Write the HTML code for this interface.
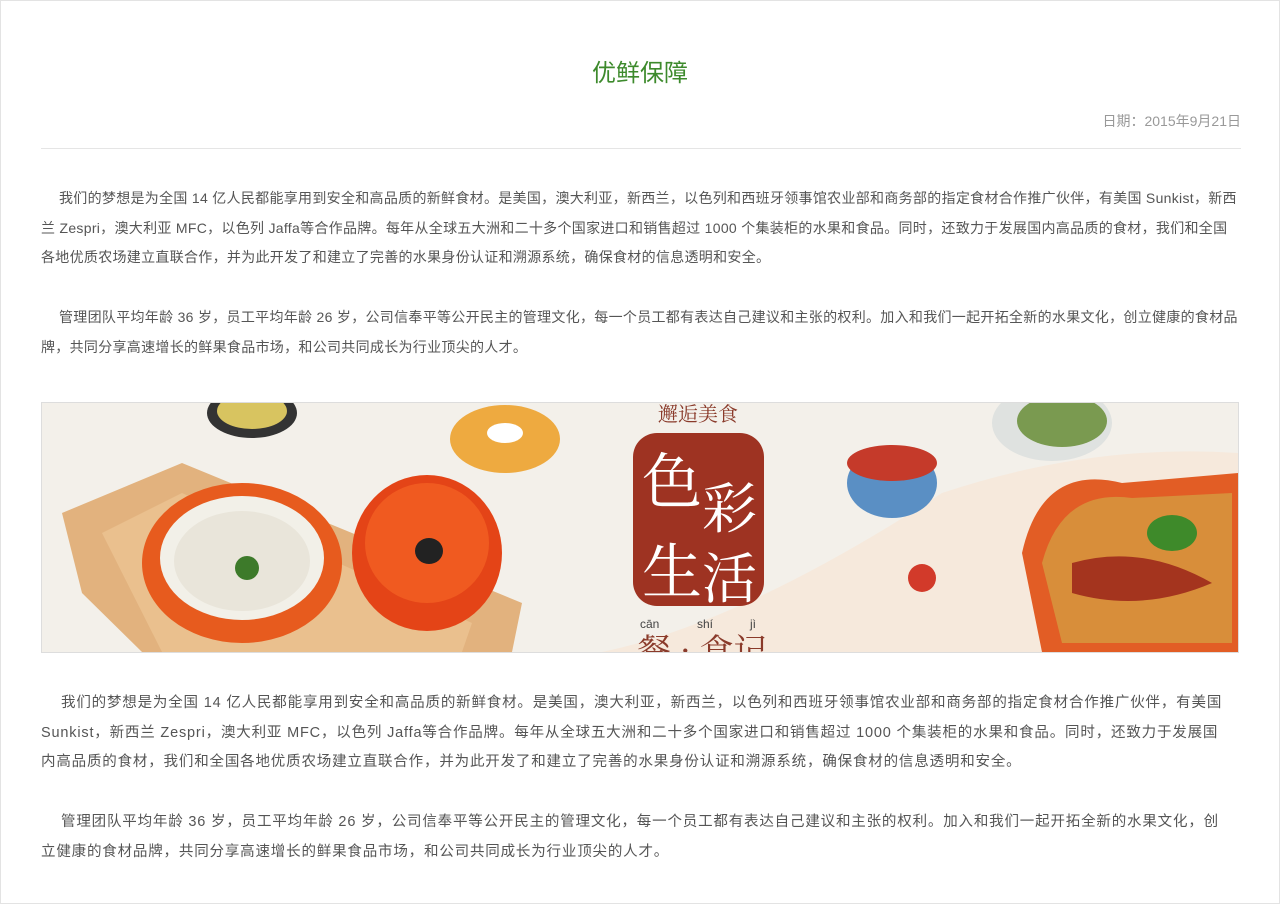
<!DOCTYPE html>
<html><head><meta charset="utf-8"><style>
html,body{margin:0;padding:0;background:#fff}
body{width:1278px;height:902px;border:1px solid #e3e3e3;position:relative;overflow:hidden;font-family:"Liberation Sans","Noto Sans CJK SC",sans-serif;color:#555}
h1{position:absolute;top:57px;left:0;width:100%;text-align:center;margin:0;font-weight:normal;font-size:24px;color:#3d8a2c;line-height:32px}
.date{position:absolute;top:110px;right:38px;font-size:14px;color:#999}
.hr{position:absolute;top:147px;left:40px;width:1200px;height:1px;background:#e5e5e5}
.p{position:absolute;left:40px;width:1200px;font-size:14px;line-height:29.5px;text-indent:18px;margin:0;letter-spacing:0.3px}
.p2{font-size:14.5px;line-height:29.5px;text-indent:20px;letter-spacing:0.82px}
.img{position:absolute;left:40px;top:401px;width:1196px;height:249px;border:1px solid #ddd;background:#f4f1ea;overflow:hidden}
</style></head><body>
<h1>优鲜保障</h1>
<div class="date">日期：2015年9月21日</div>
<div class="hr"></div>
<p class="p" style="top:183px">我们的梦想是为全国 14 亿人民都能享用到安全和高品质的新鲜食材。是美国，澳大利亚，新西兰，以色列和西班牙领事馆农业部和商务部的指定食材合作推广伙伴，有美国 Sunkist，新西兰 Zespri，澳大利亚 MFC，以色列 Jaffa等合作品牌。每年从全球五大洲和二十多个国家进口和销售超过 1000 个集装柜的水果和食品。同时，还致力于发展国内高品质的食材，我们和全国各地优质农场建立直联合作，并为此开发了和建立了完善的水果身份认证和溯源系统，确保食材的信息透明和安全。</p>
<p class="p" style="top:302px">管理团队平均年龄 36 岁，员工平均年龄 26 岁，公司信奉平等公开民主的管理文化，每一个员工都有表达自己建议和主张的权利。加入和我们一起开拓全新的水果文化，创立健康的食材品牌，共同分享高速增长的鲜果食品市场，和公司共同成长为行业顶尖的人才。</p>
<div class="img">
<svg width="1196" height="249" viewBox="0 0 1196 249">
<rect width="1196" height="249" fill="#f3f0ea"/>
<path d="M900 90 Q1050 40 1196 50 L1196 249 L560 249 Q700 220 900 90Z" fill="#f6e9dc"/>
<path d="M20 110 L140 60 L480 200 L470 249 L100 249 L40 190Z" fill="#e2b27e"/>
<path d="M60 130 L140 90 L430 220 L420 249 L120 249Z" fill="#eac08e"/>
<ellipse cx="200" cy="160" rx="100" ry="80" fill="#e75b1e"/>
<ellipse cx="200" cy="155" rx="82" ry="62" fill="#f2f0e8"/>
<ellipse cx="200" cy="158" rx="68" ry="50" fill="#e9e5da"/>
<circle cx="205" cy="165" r="12" fill="#3d7a2a"/>
<ellipse cx="385" cy="150" rx="75" ry="78" fill="#e44417"/>
<ellipse cx="385" cy="140" rx="62" ry="60" fill="#f05a20"/>
<ellipse cx="387" cy="148" rx="14" ry="13" fill="#222"/>
<ellipse cx="463" cy="36" rx="55" ry="34" fill="#eeaa40"/>
<ellipse cx="463" cy="30" rx="18" ry="10" fill="#fff"/>
<ellipse cx="210" cy="10" rx="45" ry="25" fill="#333"/>
<ellipse cx="210" cy="8" rx="35" ry="18" fill="#d8c460"/>
<rect x="591" y="30" width="131" height="173" rx="24" fill="#9e3322"/>
<text x="656" y="18" font-family="Noto Serif CJK SC,serif" font-size="20" fill="#8a3a2a" text-anchor="middle">邂逅美食</text>
<text x="600" y="100" font-family="Noto Serif CJK SC,serif" font-size="60" fill="#fff">色</text>
<text x="660" y="125" font-family="Noto Serif CJK SC,serif" font-size="55" fill="#fff">彩</text>
<text x="600" y="190" font-family="Noto Serif CJK SC,serif" font-size="60" fill="#fff">生</text>
<text x="660" y="195" font-family="Noto Serif CJK SC,serif" font-size="55" fill="#fff">活</text>
<text x="598" y="225" font-size="12" fill="#444">cān</text><text x="655" y="225" font-size="12" fill="#444">shí</text><text x="708" y="225" font-size="12" fill="#444">jì</text>
<text x="595" y="260" font-family="Noto Serif CJK SC,serif" font-size="34" fill="#8a3a2a">餐 · 食记</text>
<ellipse cx="850" cy="80" rx="45" ry="35" fill="#5a8fc4"/>
<ellipse cx="850" cy="60" rx="45" ry="18" fill="#c53a2a"/>
<ellipse cx="1010" cy="20" rx="60" ry="38" fill="#dfe2e0"/>
<ellipse cx="1020" cy="18" rx="45" ry="26" fill="#7a9a50"/>
<path d="M980 150 Q1000 60 1080 80 L1196 70 L1196 249 L1000 249Z" fill="#e25d25"/>
<path d="M1000 160 Q1020 85 1090 95 L1190 90 L1190 240 L1020 240Z" fill="#d88e3a"/>
<ellipse cx="1130" cy="130" rx="25" ry="18" fill="#3e8a2a"/>
<path d="M1030 160 Q1100 140 1170 180 Q1100 210 1030 190Z" fill="#a4341e"/>
<circle cx="880" cy="175" r="14" fill="#d23a2a"/>
</svg>
</div>
<p class="p p2" style="top:688px">我们的梦想是为全国 14 亿人民都能享用到安全和高品质的新鲜食材。是美国，澳大利亚，新西兰，以色列和西班牙领事馆农业部和商务部的指定食材合作推广伙伴，有美国 Sunkist，新西兰 Zespri，澳大利亚 MFC，以色列 Jaffa等合作品牌。每年从全球五大洲和二十多个国家进口和销售超过 1000 个集装柜的水果和食品。同时，还致力于发展国<br>内高品质的食材，我们和全国各地优质农场建立直联合作，并为此开发了和建立了完善的水果身份认证和溯源系统，确保食材的信息透明和安全。</p>
<p class="p p2" style="top:807px">管理团队平均年龄 36 岁，员工平均年龄 26 岁，公司信奉平等公开民主的管理文化，每一个员工都有表达自己建议和主张的权利。加入和我们一起开拓全新的水果文化，创<br>立健康的食材品牌，共同分享高速增长的鲜果食品市场，和公司共同成长为行业顶尖的人才。</p>
</body></html>
